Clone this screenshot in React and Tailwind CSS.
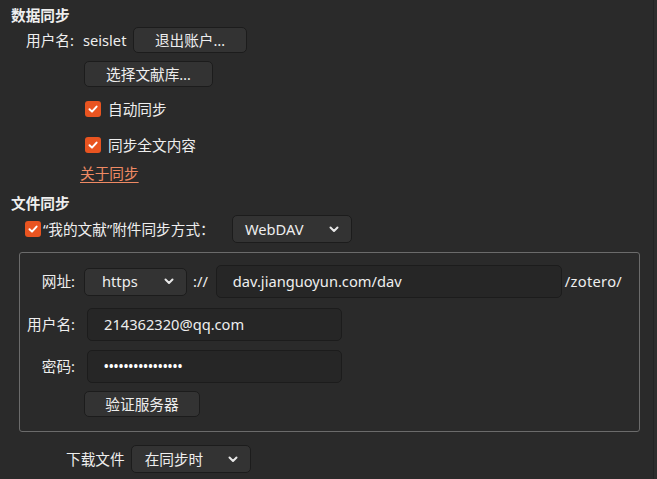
import React from 'react';

const font = {
  fontFamily: '"Noto Sans", "Noto Sans CJK SC", sans-serif',
};

const Chevron = () => (
  <svg width="10" height="7" viewBox="0 0 10 7" className="shrink-0">
    <path d="M1.5 1.5 L5 5 L8.5 1.5" fill="none" stroke="#e8e8e8" strokeWidth="2" strokeLinecap="round" strokeLinejoin="round" />
  </svg>
);

const Check = () => (
  <div className="w-4 h-4 rounded-[3px] bg-[#e95420] flex items-center justify-center shrink-0">
    <svg width="12" height="12" viewBox="0 0 12 12">
      <path d="M2.5 6.2 L5 8.6 L9.6 3.6" fill="none" stroke="#ffffff" strokeWidth="2" strokeLinecap="round" strokeLinejoin="round" />
    </svg>
  </div>
);

const Button = ({ children, className = '' }) => (
  <div className={`h-[26px] flex items-center justify-center rounded-[5px] bg-[#333333] border border-[#1c1c1c] ${className}`}>
    {children}
  </div>
);

const Select = ({ value, className = '' }) => (
  <div className={`h-[28px] flex items-center justify-between rounded-[5px] bg-[#333333] border border-[#1c1c1c] pr-[12px] ${className}`}>
    <span>{value}</span>
    <Chevron />
  </div>
);

const Input = ({ value, className = '' }) => (
  <div className={`h-[33px] flex items-center rounded-[5px] bg-[#262626] border border-[#1c1c1c] pl-[16px] ${className}`}>
    {value}
  </div>
);

export default function App() {
  return (
    <div style={font} className="w-[657px] h-[479px] bg-[#2a2a2a] text-[#eeeeee] text-[14.67px] leading-none overflow-hidden flex">
      <div className="w-[653px] shrink-0">
        {/* 数据同步 */}
        <div className="mt-[4px] h-[22px] flex items-center pl-[11px] font-bold">数据同步</div>

        <div className="mt-[1px] h-[26px] flex items-center pl-[26px]">
          <span className="w-[49px]">用户名:</span>
          <span className="ml-[8px]">seislet</span>
          <Button className="ml-auto mr-[406px] w-[114px]">退出账户…</Button>
        </div>

        <div className="mt-[8px] pl-[84px]">
          <Button className="w-[129px]">选择文献库…</Button>
        </div>

        <div className="mt-[11px] h-[22px] flex items-center pl-[85px] gap-[7px]">
          <Check />
          <span>自动同步</span>
        </div>

        <div className="mt-[14px] h-[22px] flex items-center pl-[85px] gap-[7px]">
          <Check />
          <span>同步全文内容</span>
        </div>

        <div className="mt-[6px] h-[22px] flex items-center pl-[80px]">
          <span className="text-[#ef8a64] underline underline-offset-[3px]">关于同步</span>
        </div>

        {/* 文件同步 */}
        <div className="mt-[8px] h-[22px] flex items-center pl-[11px] font-bold">文件同步</div>

        <div className="mt-[1px] h-[28px] flex items-center pl-[25px]">
          <Check />
          <span className="ml-[2px] w-[189px]">“我的文献”附件同步方式：</span>
          <Select value="WebDAV" className="w-[120px] pl-[12px]" />
        </div>

        <div className="mt-[9px] ml-[19px] w-[621px] border border-[#6b6b6b] rounded-[3px] pt-[12px] pb-[14px]">
          <div className="h-[33px] flex items-center">
            <span className="w-[55px] text-right">网址:</span>
            <Select value="https" className="ml-[9px] w-[103px] pl-[17px]" />
            <span className="ml-[6px]">://</span>
            <Input value="dav.jianguoyun.com/dav" className="ml-[8px] w-[346px]" />
            <span className="ml-[3px] tracking-[0.3px]">/zotero/</span>
          </div>

          <div className="mt-[10px] h-[33px] flex items-center">
            <span className="w-[55px] text-right">用户名:</span>
            <Input value="214362320@qq.com" className="ml-[12px] w-[255px]" />
          </div>

          <div className="mt-[9px] h-[33px] flex items-center">
            <span className="w-[55px] text-right">密码:</span>
            <Input value={<span className="text-[12px] font-bold tracking-[0.4px] text-white">••••••••••••••••</span>} className="ml-[12px] w-[255px]" />
          </div>

          <div className="mt-[8px] pl-[64px]">
            <Button className="w-[116px]">验证服务器</Button>
          </div>
        </div>

        <div className="mt-[13px] h-[28px] flex items-center pl-[66px]">
          <span>下载文件</span>
          <Select value="在同步时" className="ml-[6px] w-[120px] pl-[13px]" />
        </div>
      </div>
      <div className="w-[1px] h-full bg-[#232323]" />
      <div className="flex-1 h-full bg-[#2d2d2d]" />
    </div>
  );
}
